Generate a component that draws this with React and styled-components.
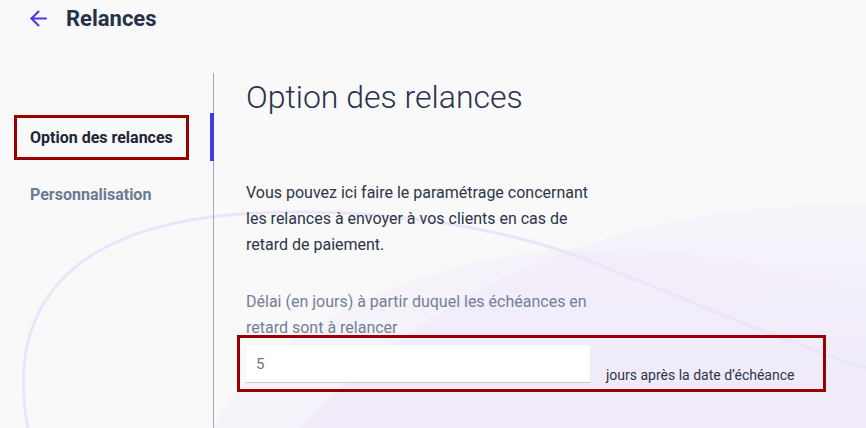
import React, { useState } from 'react'
import styled, { createGlobalStyle } from 'styled-components'

const Global = createGlobalStyle`
  html, body { margin: 0; padding: 0; }
  body {
    background: #f9f9fa;
    font-family: Roboto, "Liberation Sans", sans-serif;
  }
`;

const Page = styled.div`
  position: relative;
  min-height: 428px;
  overflow: hidden;
  background: #f9f9fa;
`;

const Backdrop = styled.svg`
  position: absolute;
  inset: 0;
  width: 100%;
  height: 100%;
  pointer-events: none;
  z-index: 0;
`;

const Layer = styled.div`
  position: relative;
  z-index: 1;
`;

const Header = styled.header`
  display: flex;
  align-items: center;
  gap: 19px;
  height: 36px;
  padding-left: 30px;
`;

const BackButton = styled.button`
  display: flex;
  align-items: center;
  padding: 0;
  border: none;
  background: none;
  color: #4639e2;
  cursor: pointer;
`;

const PageTitle = styled.h1`
  margin: 0;
  font-size: 22px;
  font-weight: 700;
  color: #263149;
`;

const Body = styled.div`
  display: grid;
  grid-template-columns: 214px 1fr;
  margin-top: 37px;
  min-height: 355px;
`;

const Sidebar = styled.nav`
  display: flex;
  flex-direction: column;
  gap: 9px;
  padding-top: 40px;
  border-right: 1px solid #a3a9ba;
`;

const NavItem = styled.div`
  display: flex;
  align-items: center;
  height: 48px;
  padding-left: 14px;
  margin-right: -1px;
  border-right: 4px solid ${p => (p.active ? '#4639e2' : 'transparent')};
  font-size: 16px;
  font-weight: 700;
  color: ${p => (p.active ? '#1d2537' : '#6c7a91')};
  cursor: pointer;
`;

const NavLabel = styled.span`
  padding: 0 13px;
  line-height: 39px;
  border: 3px solid ${p => (p.marked ? '#990000' : 'transparent')};
`;

const Main = styled.main`
  padding: 4px 0 0 32px;
`;

const SectionTitle = styled.h2`
  margin: 0;
  font-size: 32px;
  font-weight: 300;
  line-height: 40px;
  color: #27324b;
`;

const Intro = styled.p`
  max-width: 350px;
  margin: 63px 0 0;
  font-size: 16px;
  line-height: 26px;
  color: #2c3548;
`;

const Label = styled.label`
  display: block;
  max-width: 350px;
  margin-top: 31px;
  font-size: 16px;
  line-height: 26px;
  color: #728097;
`;

const FieldRow = styled.div`
  display: flex;
  align-items: flex-end;
  gap: 16px;
  width: fit-content;
  margin: -6px 0 0 -9px;
  padding: 7px 29px 7px 6px;
  border: 3px solid ${p => (p.marked ? '#990000' : 'transparent')};
`;

const NumberInput = styled.input`
  box-sizing: border-box;
  width: 344px;
  height: 37px;
  padding: 0 10px;
  border: none;
  border-radius: 3px 3px 0 0;
  background: #fff;
  box-shadow: 0 1px 0 #c7c7cc, 0 0 2px rgba(0, 0, 0, 0.06);
  font-family: inherit;
  font-size: 15px;
  color: #6b7588;
  outline: none;
`;

const Suffix = styled.span`
  margin-bottom: -3px;
  font-size: 14px;
  line-height: 20px;
  color: #2c3548;
`;

const items = [
  { id: 'options', label: 'Option des relances' },
  { id: 'perso', label: 'Personnalisation' },
];

function Waves() {
  return (
    <Backdrop viewBox="0 0 866 428" preserveAspectRatio="none">
      <defs>
        <linearGradient id="tint" x1="0" y1="0" x2="0" y2="1">
          <stop offset="0" stopColor="#f4f0fb" stopOpacity="0.6" />
          <stop offset="1" stopColor="#eee8f8" stopOpacity="1" />
        </linearGradient>
      </defs>
      <path d="M 300 428 C 420 300, 600 200, 866 205 L 866 428 Z" fill="url(#tint)" />
      <path d="M 214 428 C 260 330, 420 260, 560 250 C 640 245, 760 260, 866 290 L 866 428 Z" fill="#f1ecf9" opacity="0.5" />
      <path d="M 28 428 C 12 345, 28 230, 240 214 C 380 205, 510 228, 600 265 C 700 305, 780 340, 866 368" fill="none" stroke="#ece4fb" strokeWidth="3" />
    </Backdrop>
  );
}

export default function App() {
  const [active, setActive] = useState('options');
  const [delay, setDelay] = useState('5');

  return (
    <Page>
      <Global />
      <Waves />
      <Layer>
        <Header>
          <BackButton aria-label="Retour">
            <svg width="17" height="17" viewBox="0 0 17 17" fill="none" stroke="currentColor" strokeWidth="2" strokeLinecap="round" strokeLinejoin="round">
              <path d="M16 8.5H1.5" />
              <path d="M8.5 1.5 1.5 8.5l7 7" />
            </svg>
          </BackButton>
          <PageTitle>Relances</PageTitle>
        </Header>
        <Body>
          <Sidebar>
            {items.map(item => (
              <NavItem key={item.id} active={item.id === active} onClick={() => setActive(item.id)}>
                <NavLabel marked={item.id === 'options'}>{item.label}</NavLabel>
              </NavItem>
            ))}
          </Sidebar>
          <Main>
            <SectionTitle>Option des relances</SectionTitle>
            <Intro>
              Vous pouvez ici faire le paramétrage concernant les relances à envoyer à vos clients en cas de retard de paiement.
            </Intro>
            <Label htmlFor="delay">Délai (en jours) à partir duquel les échéances en retard sont à relancer</Label>
            <FieldRow marked>
              <NumberInput id="delay" value={delay} onChange={e => setDelay(e.target.value)} />
              <Suffix>jours après la date d’échéance</Suffix>
            </FieldRow>
          </Main>
        </Body>
      </Layer>
    </Page>
  )
}
